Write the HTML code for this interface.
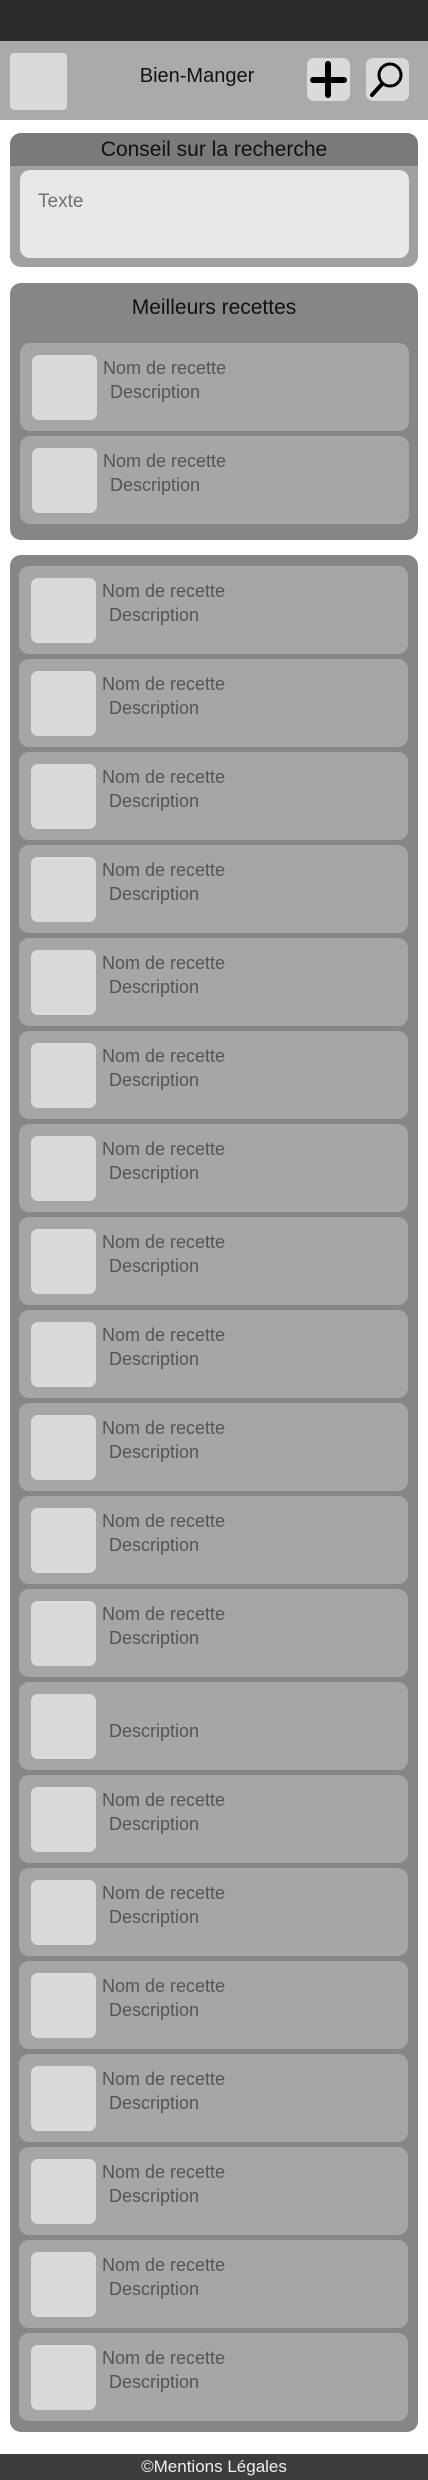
<!DOCTYPE html>
<html><head><meta charset="utf-8"><style>
*{margin:0;padding:0;box-sizing:border-box}
body{width:428px;height:2480px;background:#fff;font-family:"Liberation Sans",sans-serif;position:relative;overflow:hidden}
.abs{position:absolute}
.item{position:absolute;left:0;width:389px;height:88px;background:#a7a6a7;border-radius:10px}
.th{position:absolute;left:12px;top:12px;width:65px;height:65px;background:#dadada;border-radius:7px}
.nm{position:absolute;left:83px;top:15px;font-size:18px;color:#555;white-space:nowrap}
.ds{position:absolute;left:90px;top:39px;font-size:18px;color:#555;white-space:nowrap}
</style></head><body>
<div class="abs" style="left:0;top:0;width:428px;height:41px;background:#2a2a2a"></div>
<div class="abs" style="left:0;top:41px;width:428px;height:79px;background:#aaa"></div>
<div class="abs" style="left:10px;top:53px;width:57px;height:57px;background:#dadada;border-radius:4px"></div>
<div class="abs" style="left:100px;top:65px;width:194px;text-align:center;font-size:20px;color:#111">Bien-Manger</div>
<div class="abs" style="left:307px;top:58px;width:43px;height:43px;background:#dadada;border-radius:7px"></div>
<svg class="abs" style="left:307px;top:58px" width="43" height="43"><path d="M21 6V37M6 22H37" stroke="#000" stroke-width="6" stroke-linecap="round"/></svg>
<div class="abs" style="left:366px;top:58px;width:43px;height:43px;background:#dadada;border-radius:7px"></div>
<svg class="abs" style="left:366px;top:58px" width="43" height="43"><circle cx="24" cy="17" r="11" stroke="#000" stroke-width="3" fill="none"/><path d="M16 26L6 37" stroke="#000" stroke-width="4" stroke-linecap="round"/></svg>

<div class="abs" style="left:10px;top:133px;width:408px;height:134px;background:#a0a0a0;border-radius:11px;overflow:hidden">
<div style="height:33px;background:#7a7a7a;text-align:center;font-size:21px;line-height:33px;color:#111">Conseil sur la recherche</div>
<div class="abs" style="left:10px;top:37px;width:389px;height:88px;background:#e8e8e8;border-radius:10px"><div class="abs" style="left:18px;top:21px;font-size:19px;color:#707070">Texte</div></div>
</div>

<div class="abs" style="left:10px;top:283px;width:408px;height:257px;background:#868686;border-radius:11px">
<div style="text-align:center;font-size:21px;margin-top:13px;color:#111">Meilleurs recettes</div>
<div class="abs" style="left:10px;top:60px;width:389px">
<div class="item" style="top:0"><div class="th"></div><div class="nm">Nom de recette</div><div class="ds">Description</div></div>
<div class="item" style="top:93px"><div class="th"></div><div class="nm">Nom de recette</div><div class="ds">Description</div></div>
</div></div>

<div class="abs" style="left:10px;top:555px;width:408px;height:1877px;background:#868686;border-radius:11px">
<div class="abs" style="left:9px;top:11px;width:389px">
<div class="item" style="top:0px"><div class="th"></div><div class="nm">Nom de recette</div><div class="ds">Description</div></div>
<div class="item" style="top:93px"><div class="th"></div><div class="nm">Nom de recette</div><div class="ds">Description</div></div>
<div class="item" style="top:186px"><div class="th"></div><div class="nm">Nom de recette</div><div class="ds">Description</div></div>
<div class="item" style="top:279px"><div class="th"></div><div class="nm">Nom de recette</div><div class="ds">Description</div></div>
<div class="item" style="top:372px"><div class="th"></div><div class="nm">Nom de recette</div><div class="ds">Description</div></div>
<div class="item" style="top:465px"><div class="th"></div><div class="nm">Nom de recette</div><div class="ds">Description</div></div>
<div class="item" style="top:558px"><div class="th"></div><div class="nm">Nom de recette</div><div class="ds">Description</div></div>
<div class="item" style="top:651px"><div class="th"></div><div class="nm">Nom de recette</div><div class="ds">Description</div></div>
<div class="item" style="top:744px"><div class="th"></div><div class="nm">Nom de recette</div><div class="ds">Description</div></div>
<div class="item" style="top:837px"><div class="th"></div><div class="nm">Nom de recette</div><div class="ds">Description</div></div>
<div class="item" style="top:930px"><div class="th"></div><div class="nm">Nom de recette</div><div class="ds">Description</div></div>
<div class="item" style="top:1023px"><div class="th"></div><div class="nm">Nom de recette</div><div class="ds">Description</div></div>
<div class="item" style="top:1116px"><div class="th"></div><div class="ds">Description</div></div>
<div class="item" style="top:1209px"><div class="th"></div><div class="nm">Nom de recette</div><div class="ds">Description</div></div>
<div class="item" style="top:1302px"><div class="th"></div><div class="nm">Nom de recette</div><div class="ds">Description</div></div>
<div class="item" style="top:1395px"><div class="th"></div><div class="nm">Nom de recette</div><div class="ds">Description</div></div>
<div class="item" style="top:1488px"><div class="th"></div><div class="nm">Nom de recette</div><div class="ds">Description</div></div>
<div class="item" style="top:1581px"><div class="th"></div><div class="nm">Nom de recette</div><div class="ds">Description</div></div>
<div class="item" style="top:1674px"><div class="th"></div><div class="nm">Nom de recette</div><div class="ds">Description</div></div>
<div class="item" style="top:1767px"><div class="th"></div><div class="nm">Nom de recette</div><div class="ds">Description</div></div>
</div></div>

<div class="abs" style="left:0;top:2454px;width:428px;height:26px;background:#3d3d3d;color:#eee;text-align:center;font-size:17px;line-height:26px">©Mentions Légales</div>
</body></html>
